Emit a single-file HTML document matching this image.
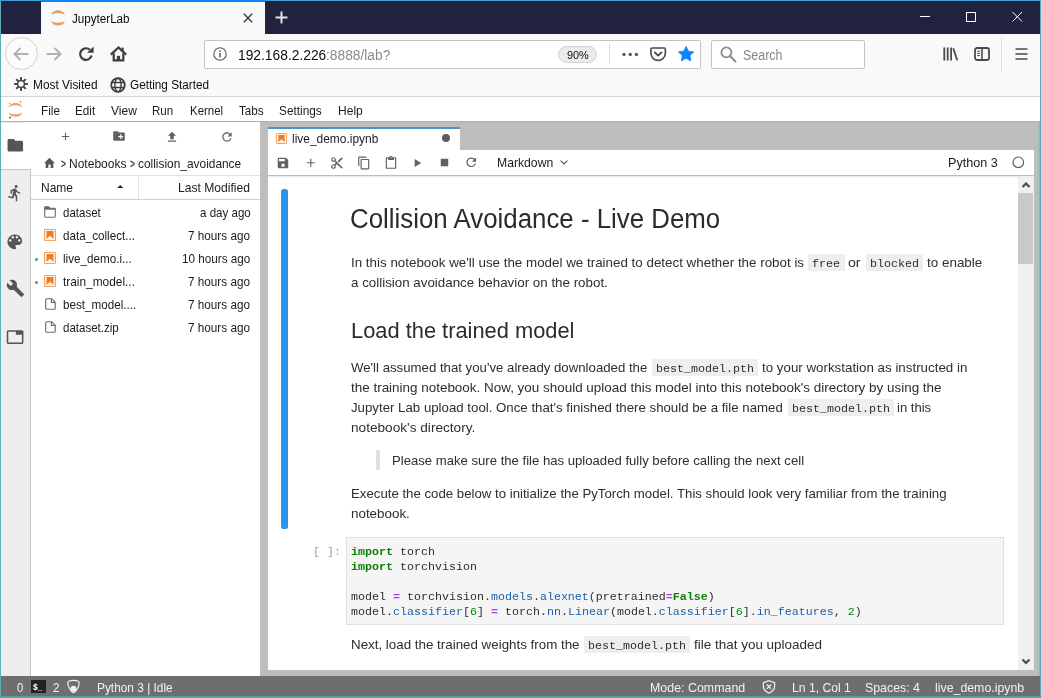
<!DOCTYPE html>
<html lang="en">
<head>
<meta charset="utf-8">
<title>JupyterLab</title>
<style>
*{box-sizing:border-box;margin:0;padding:0}
html,body{width:1041px;height:698px;overflow:hidden;background:#fff}
body{font-family:"Liberation Sans",sans-serif;color:#111;position:relative}
.abs{position:absolute}
.t{position:absolute;white-space:pre;line-height:1;transform-origin:0 0}
.m{font-family:"Liberation Mono",monospace}
.ic{background:#eeeeee}
.k{color:#0a820a;font-weight:700}
.o{color:#a83df5;font-weight:700}
.p{color:#1c5fa8}
.n{color:#008800}
svg{position:absolute;overflow:visible}
#frame{position:absolute;left:0;top:0;width:1041px;height:698px;background:#5fadb9}
#titlebar{left:1px;top:1px;width:1039px;height:33px;background:#20223f}
#fftab{left:41px;top:0;width:224px;height:34px;background:#f9f9fa}
#fftabline{left:41px;top:0;width:224px;height:2px;background:#0a84ff}
#navbar{left:1px;top:34px;width:1039px;height:38px;background:#f9f9fa}
#bmbar{left:1px;top:72px;width:1039px;height:24px;background:#f9f9fa}
#bmline{left:1px;top:96px;width:1039px;height:1px;background:#d4d4d4}
#urlbar{left:203.500px;top:39.500px;width:497px;height:29px;background:#fff;border:1px solid #c4c4c7;border-radius:2px}
#searchbar{left:711px;top:39.500px;width:154px;height:29px;background:#fff;border:1px solid #c4c4c7;border-radius:2px}
#jmenu{left:1px;top:97px;width:1039px;height:24px;background:#fff}
#jmenuline{left:1px;top:121px;width:1039px;height:1px;background:#b0b0b0}
#sidebar{left:1px;top:122px;width:29px;height:554px;background:#eeeeee}
#sidebarline{left:29.600px;top:169px;width:1px;height:507px;background:#c4c4c4}
#fb{left:31px;top:122px;width:229px;height:554px;background:#fff}
#dock{left:260px;top:122px;width:780px;height:554px;background:#bdbdbd}
#panel{left:268px;top:150px;width:766px;height:520px;background:#fff}
#status{left:1px;top:676px;width:1039px;height:20px;background:#6e6e6e}
#edge{left:1036.500px;top:122px;width:3.500px;height:554px;background:linear-gradient(90deg,#bdbdbd,#a3c0c4 60%,#7fb2ba)}
#jbg{left:1px;top:97px;width:1039px;height:579px;background:#fff}
#topline{left:0;top:0;width:1041px;height:1px;background:#3a9fd2}
#app{position:absolute;left:0;top:0;width:1041px;height:698px;overflow:hidden;will-change:transform}
#botline{left:0;top:696px;width:1041px;height:2px;background:linear-gradient(#5f949c,#5aa3af)}
</style>
</head>
<body>
<div id="app">
<div id="frame"></div>
<div id="titlebar" class="abs"></div><div id="topline" class="abs"></div>
<div id="fftab" class="abs"></div><div id="fftabline" class="abs"></div>
<svg style="left:49px;top:9px" width="18" height="18" viewBox="0 0 18 18"><path d="M2 5.800C4 -0.200 14 -0.200 16 5.800C13 3.600 5 3.600 2 5.800Z" fill="#dfa36a"/><path d="M2 11.900C4 18 14 18 16 11.900C13 14.200 5 14.200 2 11.900Z" fill="#dfa36a"/></svg>
<span class="t" style="left:71.60px;top:13.00px;font-size:12px;color:#0c0c0d;transform:scaleX(0.9693)">JupyterLab</span>
<svg style="left:243px;top:13px" width="10" height="10" viewBox="0 0 10 10"><path d="M0.8 0.8L9.2 9.2M9.2 0.8L0.8 9.2" stroke="#3a3a3c" stroke-width="1.4" fill="none"/></svg>
<svg style="left:275px;top:11px" width="13" height="13" viewBox="0 0 13 13"><path d="M6.5 0.5V12.5M0.5 6.5H12.5" stroke="#e4e4e8" stroke-width="2" fill="none"/></svg>
<svg style="left:919px;top:11px" width="104" height="12" viewBox="0 0 104 12"><path d="M1 5.5H11" stroke="#fff" stroke-width="1"/><rect x="47.5" y="1.5" width="9" height="9" stroke="#fff" stroke-width="1" fill="none"/><path d="M93.5 1L103 10.5M103 1L93.5 10.5" stroke="#fff" stroke-width="1" fill="none"/></svg>
<div id="navbar" class="abs"></div><div id="bmbar" class="abs"></div><div id="bmline" class="abs"></div>
<div class="abs" style="left:4.500px;top:37.400px;width:33px;height:33px;border-radius:50%;border:1px solid #d2d2d5;background:#fbfbfc"></div>
<svg style="left:13px;top:47px" width="16" height="14" viewBox="0 0 16 14"><path d="M15.5 7H1.5M7.5 1L1.5 7L7.5 13" stroke="#b1b1b3" stroke-width="2" fill="none" stroke-linejoin="miter"/></svg>
<svg style="left:46px;top:47px" width="16" height="14" viewBox="0 0 16 14"><path d="M0.5 7H14.5M8.5 1L14.5 7L8.5 13" stroke="#b1b1b3" stroke-width="2" fill="none"/></svg>
<svg style="left:78px;top:46px" width="16" height="16" viewBox="0 0 16 16"><path d="M13.600 9.400A5.800 5.800 0 1 1 11.900 3.800" stroke="#3f3f41" stroke-width="2.200" fill="none"/><path d="M9 6.800H15.600V0.400Z" fill="#3f3f41"/></svg>
<svg style="left:110px;top:46px" width="17" height="16" viewBox="0 0 17 16"><path d="M0.800 8.600L8.500 1.400L16.200 8.600" stroke="#3f3f41" stroke-width="2.200" fill="none" stroke-linejoin="miter"/><path d="M3.700 7.200V14.400H13.300V7.200" stroke="#3f3f41" stroke-width="2.200" fill="none"/><rect x="6.900" y="9.800" width="3.200" height="4.800" fill="#3f3f41"/><rect x="11.500" y="1.600" width="2.200" height="4" fill="#3f3f41"/></svg>
<div id="urlbar" class="abs"></div>
<svg style="left:213px;top:47px" width="14" height="14" viewBox="0 0 14 14"><circle cx="7" cy="7" r="6.2" stroke="#58585a" stroke-width="1.1" fill="none"/><rect x="6.3" y="6" width="1.5" height="4.4" fill="#58585a"/><rect x="6.3" y="3.5" width="1.5" height="1.6" fill="#58585a"/></svg>
<span class="t" style="left:237.60px;top:48.00px;font-size:14px;color:#0c0c0d;transform:scaleX(0.9862)">192.168.2.226</span>
<span class="t" style="left:326.10px;top:48.00px;font-size:14px;color:#8a8a8d;transform:scaleX(0.9833)">:8888/lab?</span>
<div class="abs" style="left:558px;top:46px;width:39px;height:17px;border-radius:9px;background:#ebebee;border:1px solid #d2d2d5"></div>
<span class="t" style="left:566.60px;top:50.00px;font-size:11px;color:#0c0c0d;transform:scaleX(0.9902)">90%</span>
<div class="abs" style="left:609px;top:44px;width:1px;height:20px;background:#d9d9dc"></div>
<svg style="left:622px;top:52px" width="17" height="5" viewBox="0 0 17 5"><circle cx="2" cy="2.400" r="1.650" fill="#555557"/><circle cx="8.200" cy="2.400" r="1.650" fill="#555557"/><circle cx="14.400" cy="2.400" r="1.650" fill="#555557"/></svg>
<svg style="left:650px;top:47.200px" width="16.300" height="14.400" viewBox="0 0 17 15"><path d="M2.2 1H14.8A1.2 1.2 0 0 1 16 2.2V6.5A7.5 7.5 0 0 1 1 6.5V2.2A1.2 1.2 0 0 1 2.2 1Z" stroke="#4a4a4c" stroke-width="1.7" fill="none"/><path d="M5 5.6L8.5 9L12 5.6" stroke="#4a4a4c" stroke-width="1.9" fill="none" stroke-linecap="round" stroke-linejoin="round"/></svg>
<svg style="left:678.300px;top:46.400px" width="16.200" height="15.200" viewBox="0 0 17 16"><path d="M8.5 0.4L11 5.4L16.6 6.2L12.5 10.1L13.5 15.7L8.5 13L3.5 15.7L4.5 10.1L0.4 6.2L6 5.4Z" fill="#0a84ff" stroke="#0a84ff" stroke-width="0.8" stroke-linejoin="round"/></svg>
<div id="searchbar" class="abs"></div>
<svg style="left:720px;top:46px" width="17" height="17" viewBox="0 0 17 17"><circle cx="6.4" cy="6.4" r="5" stroke="#88888b" stroke-width="1.7" fill="none"/><path d="M10 10L15.6 15.6" stroke="#88888b" stroke-width="1.9" stroke-linecap="round"/></svg>
<span class="t" style="left:743.35px;top:48.00px;font-size:14px;color:#88888b;transform:scaleX(0.8916)">Search</span>
<svg style="left:943px;top:47px" width="16" height="14" viewBox="0 0 16 14"><path d="M1.300 0.500V13.500M4.700 0.500V13.500M8.100 0.500V13.500M10.300 1.300L14.200 13.300" stroke="#4a4a4c" stroke-width="1.800" fill="none"/></svg>
<svg style="left:974px;top:47px" width="16" height="14" viewBox="0 0 16 14"><rect x="1" y="1" width="14" height="12" rx="2.2" stroke="#4a4a4c" stroke-width="1.8" fill="none"/><path d="M8 1V13" stroke="#4a4a4c" stroke-width="1.6"/><path d="M3.2 4.2H6M3.2 6.4H6M3.2 8.6H6" stroke="#4a4a4c" stroke-width="1"/></svg>
<div class="abs" style="left:1001px;top:38px;width:1px;height:33px;background:#dedee0"></div>
<svg style="left:1015px;top:48px" width="13" height="12" viewBox="0 0 13 12"><path d="M0.5 1H12.5M0.5 6H12.5M0.5 11H12.5" stroke="#4a4a4c" stroke-width="1.7"/></svg>
<svg style="left:14px;top:76.900px" width="14" height="14" viewBox="0 0 14 14"><g stroke="#454547" stroke-width="1.900"><path d="M7 0.100V13.900M0.100 7H13.900M2.200 2.200L11.800 11.800M11.800 2.200L2.200 11.800"/></g><circle cx="7" cy="7" r="4.200" fill="#454547"/><circle cx="7" cy="7" r="2.700" fill="#f9f9fa"/></svg>
<span class="t" style="left:33.35px;top:79.00px;font-size:12px;color:#0c0c0d;transform:scaleX(0.9909)">Most Visited</span>
<svg style="left:110px;top:77px" width="16" height="16" viewBox="0 0 16 16"><circle cx="8" cy="8" r="6.800" stroke="#3f3f41" stroke-width="1.800" fill="none"/><ellipse cx="8" cy="8" rx="3.100" ry="6.800" stroke="#3f3f41" stroke-width="1.400" fill="none"/><path d="M1.600 5.500H14.400M1.600 10.500H14.400" stroke="#3f3f41" stroke-width="1.400"/></svg>
<span class="t" style="left:130.10px;top:79.00px;font-size:12px;color:#0c0c0d;transform:scaleX(0.9794)">Getting Started</span>
<div id="jbg" class="abs"></div><div id="jmenu" class="abs"></div><div id="jmenuline" class="abs"></div>
<svg style="left:8px;top:100px" width="15" height="19" viewBox="0 0 15 19"><path d="M0.600 7.400C2 1.400 13 1.400 14.400 7.400C11.400 4.600 3.600 4.600 0.600 7.400Z" fill="#f4a068"/><path d="M0.600 12.200C2 18.200 13 18.200 14.400 12.200C11.400 15 3.600 15 0.600 12.200Z" fill="#f4a068"/><circle cx="12.6" cy="1.9" r="0.9" fill="#989798"/><circle cx="2" cy="17.6" r="1.1" fill="#6f7070"/><circle cx="1.7" cy="3.400" r="0.7" fill="#989798"/></svg>
<span class="t" style="left:40.85px;top:105.00px;font-size:12.2px;color:#1c1c1c;transform:scaleX(0.9639)">File</span>
<span class="t" style="left:75.20px;top:105.00px;font-size:12.2px;color:#1c1c1c;transform:scaleX(0.9608)">Edit</span>
<span class="t" style="left:110.70px;top:105.00px;font-size:12.2px;color:#1c1c1c;transform:scaleX(0.9876)">View</span>
<span class="t" style="left:152.10px;top:105.00px;font-size:12.2px;color:#1c1c1c;transform:scaleX(0.9428)">Run</span>
<span class="t" style="left:190.10px;top:105.00px;font-size:12.2px;color:#1c1c1c;transform:scaleX(0.9385)">Kernel</span>
<span class="t" style="left:239.30px;top:105.00px;font-size:12.2px;color:#1c1c1c;transform:scaleX(0.9546)">Tabs</span>
<span class="t" style="left:279.10px;top:105.00px;font-size:12.2px;color:#1c1c1c;transform:scaleX(0.9709)">Settings</span>
<span class="t" style="left:338.10px;top:105.00px;font-size:12.2px;color:#1c1c1c;transform:scaleX(0.9884)">Help</span>
<div id="sidebar" class="abs"></div><div id="sidebarline" class="abs"></div>
<div class="abs" style="left:1px;top:123px;width:31px;height:46px;background:#fff"></div>
<div class="abs" style="left:1px;top:168.500px;width:29.500px;height:1px;background:#c4c4c4"></div>
<svg style="left:6px;top:135.8px" width="18.6" height="18.6" viewBox="0 0 24 24"><path d="M10 4H4c-1.1 0-1.99.9-1.99 2L2 18c0 1.1.9 2 2 2h16c1.1 0 2-.9 2-2V8c0-1.1-.9-2-2-2h-8l-2-2z" fill="#555"/></svg>
<svg style="left:5.6px;top:184.2px" width="18" height="18" viewBox="0 0 24 24"><path d="M13.49 5.48c1.1 0 2-.9 2-2s-.9-2-2-2-2 .9-2 2 .9 2 2 2zm-3.6 13.9l1-4.4 2.1 2v6h2v-7.5l-2.1-2 .6-3c1.3 1.5 3.3 2.5 5.5 2.5v-2c-1.9 0-3.500-1-4.300-2.400l-1-1.600c-.4-.6-1-1-1.700-1-.3 0-.5.1-.8.1l-5.200 2.200v4.700h2v-3.400l1.800-.7-1.600 8.100-4.900-1-.4 2 7 1.400z" fill="#555"/></svg>
<svg style="left:5.4px;top:232px" width="19.6" height="19.6" viewBox="0 0 24 24"><path d="M12 3c-4.970 0-9 4.030-9 9s4.030 9 9 9c.83 0 1.500-.67 1.500-1.500 0-.39-.15-.74-.39-1.010-.23-.26-.38-.61-.38-.99 0-.83.67-1.500 1.500-1.500H16c2.760 0 5-2.240 5-5 0-4.420-4.030-8-9-8zm-5.500 9c-.83 0-1.500-.67-1.500-1.500S5.670 9 6.500 9 8 9.670 8 10.500 7.330 12 6.500 12zm3-4C8.670 8 8 7.330 8 6.500S8.670 5 9.500 5s1.500.67 1.500 1.500S10.330 8 9.500 8zm5 0c-.83 0-1.500-.67-1.500-1.500S13.670 5 14.500 5s1.500.67 1.500 1.500S15.330 8 14.500 8zm3 4c-.83 0-1.500-.67-1.500-1.500S16.670 9 17.500 9s1.500.67 1.500 1.500-.67 1.500-1.500 1.500z" fill="#555"/></svg>
<svg style="left:5.8px;top:278.7px" width="18.9" height="18.9" viewBox="0 0 24 24"><path d="M22.7 19l-9.100-9.100c.9-2.300.4-5-1.500-6.900-2-2-5-2.400-7.400-1.300L9 6 6 9 1.600 4.700C.4 7.100.9 10.100 2.900 12.100c1.900 1.900 4.600 2.400 6.900 1.500l9.100 9.100c.4.400 1 .4 1.400 0l2.300-2.300c.5-.4.500-1.100.1-1.400z" fill="#555"/></svg>
<svg style="left:5.75px;top:327.6px" width="18.2" height="18.2" viewBox="0 0 24 24"><path d="M21 3H3c-1.100 0-2 .9-2 2v14c0 1.100.9 2 2 2h18c1.100 0 2-.9 2-2V5c0-1.100-.9-2-2-2zm0 16H3V5h10v4h8v10z" fill="#555"/></svg>
<div id="fb" class="abs"></div>
<svg style="left:58.6px;top:130.3px" width="13" height="13" viewBox="0 0 24 24"><path d="M19 13h-6v6h-2v-6H5v-2h6V5h2v6h6v2z" fill="#616161"/></svg>
<svg style="left:112.2px;top:129.4px" width="14" height="14" viewBox="0 0 24 24"><path d="M20 6h-8l-2-2H4c-1.11 0-1.99.89-1.99 2L2 18c0 1.11.89 2 2 2h16c1.11 0 2-.89 2-2V8c0-1.11-.89-2-2-2zm-1 8h-3v3h-2v-3h-3v-2h3V9h2v3h3v2z" fill="#616161"/></svg>
<svg style="left:165px;top:129.6px" width="14" height="14" viewBox="0 0 24 24"><path d="M9 16h6v-6h4l-7-7-7 7h4zm-4 2h14v2H5z" fill="#616161"/></svg>
<svg style="left:219.6px;top:129.8px" width="14" height="14" viewBox="0 0 24 24"><path d="M17.65 6.35C16.2 4.9 14.21 4 12 4c-4.42 0-7.99 3.58-7.99 8s3.57 8 7.99 8c3.73 0 6.84-2.55 7.73-6h-2.08c-.82 2.33-3.04 4-5.65 4-3.31 0-6-2.69-6-6s2.69-6 6-6c1.66 0 3.14.69 4.22 1.78L13 11h7V4l-2.350 2.350z" fill="#616161"/></svg>
<svg style="left:43.400px;top:156.400px" width="13" height="14.400" viewBox="0 0 24 24" preserveAspectRatio="none"><path d="M10 20v-6h4v6h5v-8h3L12 3 2 12h3v8z" fill="#555"/></svg>
<span class="t" style="left:60.60px;top:158.00px;font-size:12.2px;color:#444;font-weight:700;transform:scaleX(0.7018)">&gt;</span>
<span class="t" style="left:69.10px;top:158.00px;font-size:12.2px;color:#1c1c1c;transform:scaleX(0.9867)">Notebooks</span>
<span class="t" style="left:129.90px;top:158.00px;font-size:12.2px;color:#444;font-weight:700;transform:scaleX(0.7018)">&gt;</span>
<span class="t" style="left:138.35px;top:158.00px;font-size:12.2px;color:#1c1c1c;transform:scaleX(0.9763)">collision_avoidance</span>
<div class="abs" style="left:30.500px;top:175px;width:229.500px;height:1px;background:#e0e0e0"></div>
<div class="abs" style="left:30.500px;top:199px;width:229.500px;height:1px;background:#d0d0d0"></div>
<div class="abs" style="left:138px;top:176px;width:1px;height:23px;background:#e0e0e0"></div>
<span class="t" style="left:41.35px;top:182.00px;font-size:12.2px;color:#1c1c1c;transform:scaleX(0.9848)">Name</span>
<svg style="left:117.200px;top:185px" width="6.400" height="3.100" viewBox="0 0 7 3.500"><path d="M0 3.500L3.500 0L7 3.500Z" fill="#222"/></svg>
<span class="t" style="left:178.35px;top:182.00px;font-size:12.2px;color:#1c1c1c;transform:scaleX(0.9929)">Last Modified</span>
<svg style="left:44.3px;top:205.7px" width="12" height="12" viewBox="0 0 12 12"><path d="M0.7 1.6Q0.7 0.8 1.5 0.8H4.6L5.8 2.2H10.4Q11.3 2.2 11.3 3V10.3Q11.3 11.2 10.4 11.2H1.6Q0.7 11.2 0.7 10.3Z" fill="#fff" stroke="#6a6a6a" stroke-width="1.1"/><path d="M0.700 0.800H4.800L6 2.200H11.300V3.800H0.700Z" fill="#6a6a6a"/></svg>
<span class="t" style="left:63.35px;top:207.00px;font-size:12.2px;color:#1c1c1c;transform:scaleX(0.9445)">dataset</span>
<span class="t" style="left:199.60px;top:207.00px;font-size:12.2px;color:#1c1c1c;transform:scaleX(0.9479)">a day ago</span>
<svg style="left:44.3px;top:229.0px" width="12" height="12" viewBox="0 0 11 11"><rect x="0.5" y="0.5" width="10" height="10" rx="0.6" fill="#fdf3ea" stroke="#f3a263" stroke-width="1"/><path d="M2.300 1.900H8.700V8.900L5.500 6.300L2.300 8.900Z" fill="#ee7d22"/></svg>
<span class="t" style="left:63.35px;top:230.00px;font-size:12.2px;color:#1c1c1c;transform:scaleX(0.9571)">data_collect...</span>
<span class="t" style="left:188.35px;top:230.00px;font-size:12.2px;color:#1c1c1c;transform:scaleX(0.9629)">7 hours ago</span>
<svg style="left:44.3px;top:252.0px" width="12" height="12" viewBox="0 0 11 11"><rect x="0.5" y="0.5" width="10" height="10" rx="0.6" fill="#fdf3ea" stroke="#f3a263" stroke-width="1"/><path d="M2.300 1.900H8.700V8.900L5.500 6.300L2.300 8.900Z" fill="#ee7d22"/></svg>
<span class="t" style="left:63.35px;top:253.00px;font-size:12.2px;color:#1c1c1c;transform:scaleX(0.9572)">live_demo.i...</span>
<span class="t" style="left:182.10px;top:253.00px;font-size:12.2px;color:#1c1c1c;transform:scaleX(0.9589)">10 hours ago</span>
<svg style="left:44.3px;top:275.0px" width="12" height="12" viewBox="0 0 11 11"><rect x="0.5" y="0.5" width="10" height="10" rx="0.6" fill="#fdf3ea" stroke="#f3a263" stroke-width="1"/><path d="M2.300 1.900H8.700V8.900L5.500 6.300L2.300 8.900Z" fill="#ee7d22"/></svg>
<span class="t" style="left:63.35px;top:276.00px;font-size:12.2px;color:#1c1c1c;transform:scaleX(0.9747)">train_model...</span>
<span class="t" style="left:188.35px;top:276.00px;font-size:12.2px;color:#1c1c1c;transform:scaleX(0.9629)">7 hours ago</span>
<svg style="left:44.8px;top:297.7px" width="11" height="12" viewBox="0 0 11 12"><path d="M1.6 0.7H6.6L10.2 4.3V10.2Q10.2 11.2 9.2 11.2H1.6Q0.7 11.2 0.7 10.2V1.7Q0.7 0.7 1.6 0.7Z" fill="#fff" stroke="#6a6a6a" stroke-width="1.1"/><path d="M6.4 0.8V4.5H10" fill="none" stroke="#6a6a6a" stroke-width="1.1"/></svg>
<span class="t" style="left:63.35px;top:299.00px;font-size:12.2px;color:#1c1c1c;transform:scaleX(0.9565)">best_model....</span>
<span class="t" style="left:188.35px;top:299.00px;font-size:12.2px;color:#1c1c1c;transform:scaleX(0.9629)">7 hours ago</span>
<svg style="left:44.8px;top:320.7px" width="11" height="12" viewBox="0 0 11 12"><path d="M1.6 0.7H6.6L10.2 4.3V10.2Q10.2 11.2 9.2 11.2H1.6Q0.7 11.2 0.7 10.2V1.7Q0.7 0.7 1.6 0.7Z" fill="#fff" stroke="#6a6a6a" stroke-width="1.1"/><path d="M6.4 0.8V4.5H10" fill="none" stroke="#6a6a6a" stroke-width="1.1"/></svg>
<span class="t" style="left:63.35px;top:322.00px;font-size:12.2px;color:#1c1c1c;transform:scaleX(0.9457)">dataset.zip</span>
<span class="t" style="left:188.35px;top:322.00px;font-size:12.2px;color:#1c1c1c;transform:scaleX(0.9629)">7 hours ago</span>
<div class="abs" style="left:35.200px;top:258.4px;width:2.400px;height:2.400px;border-radius:50%;background:#55b05a"></div>
<div class="abs" style="left:35.200px;top:281.4px;width:2.400px;height:2.400px;border-radius:50%;background:#55b05a"></div>
<div id="dock" class="abs"></div>
<div class="abs" style="left:268px;top:127px;width:191.500px;height:23.500px;background:#fff"></div>
<div class="abs" style="left:268px;top:126.800px;width:191.500px;height:1.900px;background:#4f94c6"></div>
<svg style="left:276px;top:133px" width="11" height="11" viewBox="0 0 11 11"><rect x="0.5" y="0.5" width="10" height="10" rx="0.6" fill="#fdf3ea" stroke="#f3a263" stroke-width="1"/><path d="M2.300 1.900H8.700V8.900L5.500 6.300L2.300 8.900Z" fill="#ee7d22"/></svg>
<span class="t" style="left:291.60px;top:133.00px;font-size:12.2px;color:#1c1c1c;transform:scaleX(0.9800)">live_demo.ipynb</span>
<div class="abs" style="left:441.500px;top:134.300px;width:8px;height:8px;border-radius:50%;background:#5c5c5c"></div>
<div id="panel" class="abs"></div>
<div class="abs" style="left:268px;top:175px;width:766px;height:1px;background:#bdbdbd"></div>
<div class="abs" style="left:268px;top:176px;width:766px;height:2px;background:linear-gradient(#e6e6e6,#fff)"></div>
<svg style="left:276px;top:155.5px" width="14" height="14" viewBox="0 0 24 24"><path d="M17 3H5c-1.11 0-2 .9-2 2v14c0 1.1.89 2 2 2h14c1.1 0 2-.9 2-2V7l-4-4zm-5 16c-1.66 0-3-1.34-3-3s1.34-3 3-3 3 1.34 3 3-1.34 3-3 3zm3-10H5V5h10v4z" fill="#616161"/></svg>
<svg style="left:303.5px;top:156px" width="13.5" height="13.5" viewBox="0 0 24 24"><path d="M19 13h-6v6h-2v-6H5v-2h6V5h2v6h6v2z" fill="#616161"/></svg>
<svg style="left:330px;top:155.5px" width="14" height="14" viewBox="0 0 24 24"><path d="M9.64 7.64c.23-.5.36-1.05.36-1.64 0-2.21-1.79-4-4-4S2 3.79 2 6s1.79 4 4 4c.59 0 1.14-.13 1.64-.36L10 12l-2.36 2.36C7.14 14.13 6.59 14 6 14c-2.21 0-4 1.79-4 4s1.79 4 4 4 4-1.79 4-4c0-.59-.13-1.14-.36-1.64L12 14l7 7h3v-1L9.64 7.64zM6 8c-1.1 0-2-.89-2-2s.9-2 2-2 2 .89 2 2-.9 2-2 2zm0 12c-1.1 0-2-.89-2-2s.9-2 2-2 2 .89 2 2-.9 2-2 2zm6-7.5c-.28 0-.5-.22-.5-.5s.22-.5.5-.5.5.22.5.5-.22.5-.5.5zM19 3l-6 6 2 2 7-7V3z" fill="#616161"/></svg>
<svg style="left:356.5px;top:155.9px" width="14" height="14" viewBox="0 0 24 24"><path d="M16 1H4c-1.1 0-2 .9-2 2v14h2V3h12V1zm3 4H8c-1.1 0-2 .9-2 2v14c0 1.1.9 2 2 2h11c1.1 0 2-.9 2-2V7c0-1.1-.9-2-2-2zm0 16H8V7h11v14z" fill="#616161"/></svg>
<svg style="left:383.5px;top:155.6px" width="14" height="14" viewBox="0 0 24 24"><path d="M19 2h-4.18C14.4.84 13.3 0 12 0c-1.3 0-2.4.84-2.82 2H5c-1.1 0-2 .9-2 2v16c0 1.1.9 2 2 2h14c1.1 0 2-.9 2-2V4c0-1.1-.9-2-2-2zm-7 0c.55 0 1 .45 1 1s-.45 1-1 1-1-.45-1-1 .45-1 1-1zm7 18H5V4h2v3h10V4h2v16z" fill="#616161"/></svg>
<svg style="left:409.7px;top:155.6px" width="14" height="14" viewBox="0 0 24 24"><path d="M8 5v14l11-7z" fill="#616161"/></svg>
<svg style="left:436.6px;top:155.3px" width="15" height="15" viewBox="0 0 24 24"><path d="M6 6h12v12H6z" fill="#616161"/></svg>
<svg style="left:464px;top:155.3px" width="14.5" height="14.5" viewBox="0 0 24 24"><path d="M17.65 6.35C16.2 4.9 14.21 4 12 4c-4.42 0-7.99 3.58-7.99 8s3.57 8 7.99 8c3.73 0 6.84-2.55 7.73-6h-2.08c-.82 2.33-3.04 4-5.65 4-3.31 0-6-2.69-6-6s2.69-6 6-6c1.66 0 3.14.69 4.22 1.78L13 11h7V4l-2.350 2.350z" fill="#616161"/></svg>
<span class="t" style="left:496.60px;top:157.00px;font-size:12.2px;color:#1c1c1c;transform:scaleX(1.0004)">Markdown</span>
<svg style="left:560px;top:160.300px" width="8" height="5" viewBox="0 0 8 5"><path d="M0.6 0.6L4 4L7.400 0.600" stroke="#555" stroke-width="1.200" fill="none"/></svg>
<span class="t" style="left:948.10px;top:157.00px;font-size:12.2px;color:#1c1c1c;transform:scaleX(1.0341)">Python 3</span>
<svg style="left:1011.500px;top:155.600px" width="13" height="13" viewBox="0 0 13 13"><circle cx="6.300" cy="6.300" r="5.300" stroke="#616161" stroke-width="1.200" fill="none"/></svg>
<div class="abs" style="left:1018px;top:177px;width:16px;height:493px;background:#f0f0f0"></div>
<div class="abs" style="left:1018px;top:193px;width:15.300px;height:70.800px;background:#c9c9c9"></div>
<svg style="left:1020.800px;top:180.800px" width="10" height="7" viewBox="0 0 10 7"><path d="M1.500 6L5 2.500L8.500 6" stroke="#4a4a4a" stroke-width="2.200" fill="none"/></svg>
<svg style="left:1020.800px;top:658px" width="10" height="7" viewBox="0 0 10 7"><path d="M1.500 1.500L5 5L8.500 1.500" stroke="#4a4a4a" stroke-width="2.200" fill="none"/></svg>
<div class="abs" style="left:281px;top:189px;width:7px;height:339.500px;background:#2b95ea;border-radius:2.500px"></div>
<span class="t" style="left:350.25px;top:206.00px;font-size:27px;color:#2b2b2b;transform:scaleX(0.9574)">Collision Avoidance - Live Demo</span>
<span class="t" style="left:351.10px;top:256.00px;font-size:13px;color:#2e2e2e;transform:scaleX(1.0287)">In this notebook we'll use the model we trained to detect whether the robot is</span>
<span class="abs ic" style="left:808.10px;top:254.05px;width:36.58px;height:16.6px"></span><span class="t m" style="left:812.00px;top:259px;font-size:11.8px;color:#2e2e2e;transform:scaleX(0.9880)">free</span>
<span class="t" style="left:848.35px;top:256.00px;font-size:13px;color:#2e2e2e;transform:scaleX(1.0857)">or</span>
<span class="abs ic" style="left:865.60px;top:254.05px;width:57.57px;height:16.6px"></span><span class="t m" style="left:869.50px;top:259px;font-size:11.8px;color:#2e2e2e;transform:scaleX(0.9880)">blocked</span>
<span class="t" style="left:927.10px;top:256.00px;font-size:13px;color:#2e2e2e;transform:scaleX(1.0338)">to enable</span>
<span class="t" style="left:351.10px;top:276.00px;font-size:13px;color:#2e2e2e;transform:scaleX(1.0270)">a collision avoidance behavior on the robot.</span>
<span class="t" style="left:350.95px;top:319.00px;font-size:22.7px;color:#2b2b2b;transform:scaleX(0.9629)">Load the trained model</span>
<span class="t" style="left:351.10px;top:361.00px;font-size:13px;color:#2e2e2e;transform:scaleX(1.0160)">We'll assumed that you've already downloaded the</span>
<span class="abs ic" style="left:651.85px;top:359.30px;width:106.53px;height:16.6px"></span><span class="t m" style="left:655.75px;top:364px;font-size:11.8px;color:#2e2e2e;transform:scaleX(0.9880)">best_model.pth</span>
<span class="t" style="left:762.10px;top:361.00px;font-size:13px;color:#2e2e2e;transform:scaleX(1.0257)">to your workstation as instructed in</span>
<span class="t" style="left:351.10px;top:381.00px;font-size:13px;color:#2e2e2e;transform:scaleX(1.0338)">the training notebook. Now, you should upload this model into this notebook's directory by using the</span>
<span class="t" style="left:351.10px;top:401.00px;font-size:13px;color:#2e2e2e;transform:scaleX(1.0188)">Jupyter Lab upload tool. Once that's finished there should be a file named</span>
<span class="abs ic" style="left:787.60px;top:399.30px;width:106.53px;height:16.6px"></span><span class="t m" style="left:791.50px;top:404px;font-size:11.8px;color:#2e2e2e;transform:scaleX(0.9880)">best_model.pth</span>
<span class="t" style="left:897.10px;top:401.00px;font-size:13px;color:#2e2e2e;transform:scaleX(1.0026)">in this</span>
<span class="t" style="left:351.10px;top:421.00px;font-size:13px;color:#2e2e2e;transform:scaleX(1.0482)">notebook's directory.</span>
<div class="abs" style="left:376.300px;top:450px;width:3.700px;height:20px;background:#e0e0e0"></div>
<span class="t" style="left:392.10px;top:454.00px;font-size:13px;color:#2e2e2e;transform:scaleX(1.0092)">Please make sure the file has uploaded fully before calling the next cell</span>
<span class="t" style="left:351.10px;top:487.00px;font-size:13px;color:#2e2e2e;transform:scaleX(1.0167)">Execute the code below to initialize the PyTorch model. This should look very familiar from the training</span>
<span class="t" style="left:351.10px;top:507.00px;font-size:13px;color:#2e2e2e;transform:scaleX(1.0297)">notebook.</span>
<div class="abs" style="left:346px;top:537px;width:658px;height:88px;background:#f5f5f5;border:1px solid #e0e0e0"></div>
<span class="t m" style="left:313.300px;top:547px;font-size:11.8px;color:#a0a0a0;transform:scaleX(0.9880)">[ ]:</span>
<span class="t m" style="left:351.200px;top:547px;font-size:11.8px;color:#2e2e2e;transform:scaleX(0.9880)"><b class="k">import</b> torch</span>
<span class="t m" style="left:351.200px;top:562px;font-size:11.8px;color:#2e2e2e;transform:scaleX(0.9880)"><b class="k">import</b> torchvision</span>
<span class="t m" style="left:351.200px;top:592px;font-size:11.8px;color:#2e2e2e;transform:scaleX(0.9880)">model <b class="o">=</b> torchvision.<span class="p">models</span>.<span class="p">alexnet</span>(pretrained<b class="o">=</b><b class="k">False</b>)</span>
<span class="t m" style="left:351.200px;top:607px;font-size:11.8px;color:#2e2e2e;transform:scaleX(0.9880)">model.<span class="p">classifier</span>[<span class="n">6</span>] <b class="o">=</b> torch.<span class="p">nn</span>.<span class="p">Linear</span>(model.<span class="p">classifier</span>[<span class="n">6</span>].<span class="p">in_features</span>, <span class="n">2</span>)</span>
<span class="t" style="left:351.10px;top:638.00px;font-size:13px;color:#2e2e2e;transform:scaleX(1.0269)">Next, load the trained weights from the</span>
<span class="abs ic" style="left:583.85px;top:636.05px;width:106.53px;height:16.6px"></span><span class="t m" style="left:587.75px;top:641px;font-size:11.8px;color:#2e2e2e;transform:scaleX(0.9880)">best_model.pth</span>
<span class="t" style="left:693.85px;top:638.00px;font-size:13px;color:#2e2e2e;transform:scaleX(1.0360)">file that you uploaded</span>
<div id="status" class="abs"></div>
<span class="t" style="left:17.10px;top:682.00px;font-size:12.2px;color:#f2f2f2;transform:scaleX(0.9285)">0</span>
<div class="abs" style="left:31.300px;top:680px;width:14.400px;height:13.300px;background:#222"></div>
<span class="t" style="left:33px;top:682.5px;font-size:8.5px;font-weight:700;color:#fff">$_</span>
<span class="t" style="left:53.35px;top:682.00px;font-size:12.2px;color:#f2f2f2;transform:scaleX(0.9653)">2</span>
<svg style="left:67px;top:680px" width="13" height="13" viewBox="0 0 13 13"><path d="M1.700 1.300Q6.500 -0.500 11.300 1.300Q12.300 1.800 12.200 3Q11.700 8.500 7.500 12.200Q6.500 12.900 5.500 12.200Q1.300 8.500 0.800 3Q0.700 1.800 1.700 1.300Z" fill="none" stroke="#f2f2f2" stroke-width="1.200"/><circle cx="6.500" cy="8.800" r="3" fill="#f2f2f2"/></svg>
<span class="t" style="left:97.10px;top:682.00px;font-size:12.2px;color:#f2f2f2;transform:scaleX(0.9746)">Python 3 | Idle</span>
<span class="t" style="left:650.10px;top:682.00px;font-size:12.2px;color:#f2f2f2;transform:scaleX(1.0184)">Mode: Command</span>
<svg style="left:762px;top:679.5px" width="14" height="14" viewBox="0 0 14 14"><path d="M7 0.700L12.600 2.600V6.500Q12.600 10.500 7 13.200Q1.400 10.500 1.400 6.500V2.600Z" fill="none" stroke="#f2f2f2" stroke-width="1.200"/><path d="M4.800 4.500L9.200 8.900M9.200 4.500L4.800 8.900" stroke="#f2f2f2" stroke-width="1.200"/></svg>
<span class="t" style="left:792.10px;top:682.00px;font-size:12.2px;color:#f2f2f2;transform:scaleX(0.9965)">Ln 1, Col 1</span>
<span class="t" style="left:865.10px;top:682.00px;font-size:12.2px;color:#f2f2f2;transform:scaleX(1.0146)">Spaces: 4</span>
<span class="t" style="left:935.10px;top:682.00px;font-size:12.2px;color:#f2f2f2;transform:scaleX(1.0129)">live_demo.ipynb</span>
<div id="edge" class="abs"></div><div id="botline" class="abs"></div>
</div>
</body>
</html>
